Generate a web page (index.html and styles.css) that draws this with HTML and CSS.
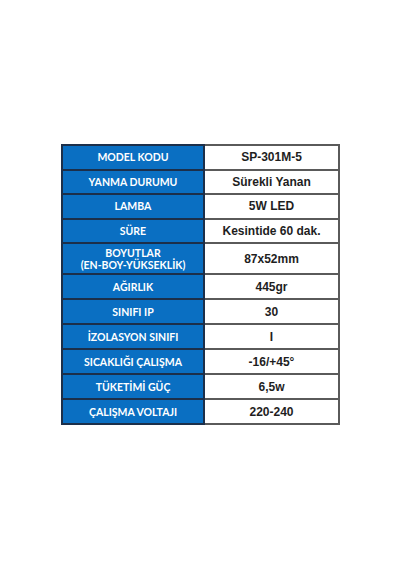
FILE: index.html
```html
<!DOCTYPE html>
<html>
<head>
<meta charset="utf-8">
<link rel="stylesheet" href="styles.css">
</head>
<body>
<table class="spec">
  <colgroup><col class="c1"><col class="c2"></colgroup>
  <tr class="r-s"><th>MODEL KODU</th><td>SP-301M-5</td></tr>
  <tr class="r-s"><th>YANMA DURUMU</th><td>Sürekli Yanan</td></tr>
  <tr class="r-s"><th>LAMBA</th><td>5W LED</td></tr>
  <tr class="r-s"><th>SÜRE</th><td>Kesintide 60 dak.</td></tr>
  <tr class="r-t"><th>BOYUTLAR<br>(EN-BOY-YÜKSEKLİK)</th><td>87x52mm</td></tr>
  <tr class="r-m"><th>AĞIRLIK</th><td>445gr</td></tr>
  <tr class="r-m"><th>SINIFI IP</th><td>30</td></tr>
  <tr class="r-m"><th>İZOLASYON SINIFI</th><td>I</td></tr>
  <tr class="r-m"><th>SICAKLIĞI ÇALIŞMA</th><td>-16/+45°</td></tr>
  <tr class="r-m"><th>TÜKETİMİ GÜÇ</th><td>6,5w</td></tr>
  <tr class="r-m"><th>ÇALIŞMA VOLTAJI</th><td>220-240</td></tr>
</table>
</body>
</html>
```

FILE: styles.css
```css
html, body {
  margin: 0;
  padding: 0;
  background: #ffffff;
}
body {
  width: 400px;
  height: 570px;
  padding-top: 144px;
  box-sizing: border-box;
}
.spec {
  margin-left: 61px;
  width: 277px;
  border-collapse: collapse;
  table-layout: fixed;
}
.c1 { width: 142px; }
.c2 { width: 135px; }
.spec th, .spec td {
  padding: 0;
  text-align: center;
  vertical-align: middle;
  border: 2px solid #5a5a5a;
}
.spec th {
  background: #0a6fc2;
  color: #ffffff;
  font-family: Lato, "Open Sans", sans-serif;
  font-weight: 700;
  font-size: 10.5px;
  line-height: 12px;
  border-color: #1c2f4a;
}
.spec td {
  background: #ffffff;
  color: #1e1e1e;
  font-family: "Liberation Sans", Arial, sans-serif;
  font-weight: 700;
  font-size: 12px;
  border-left-color: #1c2f4a;
}
.r-s { height: 24.5px; }
.r-t { height: 31px; }
.r-m { height: 25px; }
```
